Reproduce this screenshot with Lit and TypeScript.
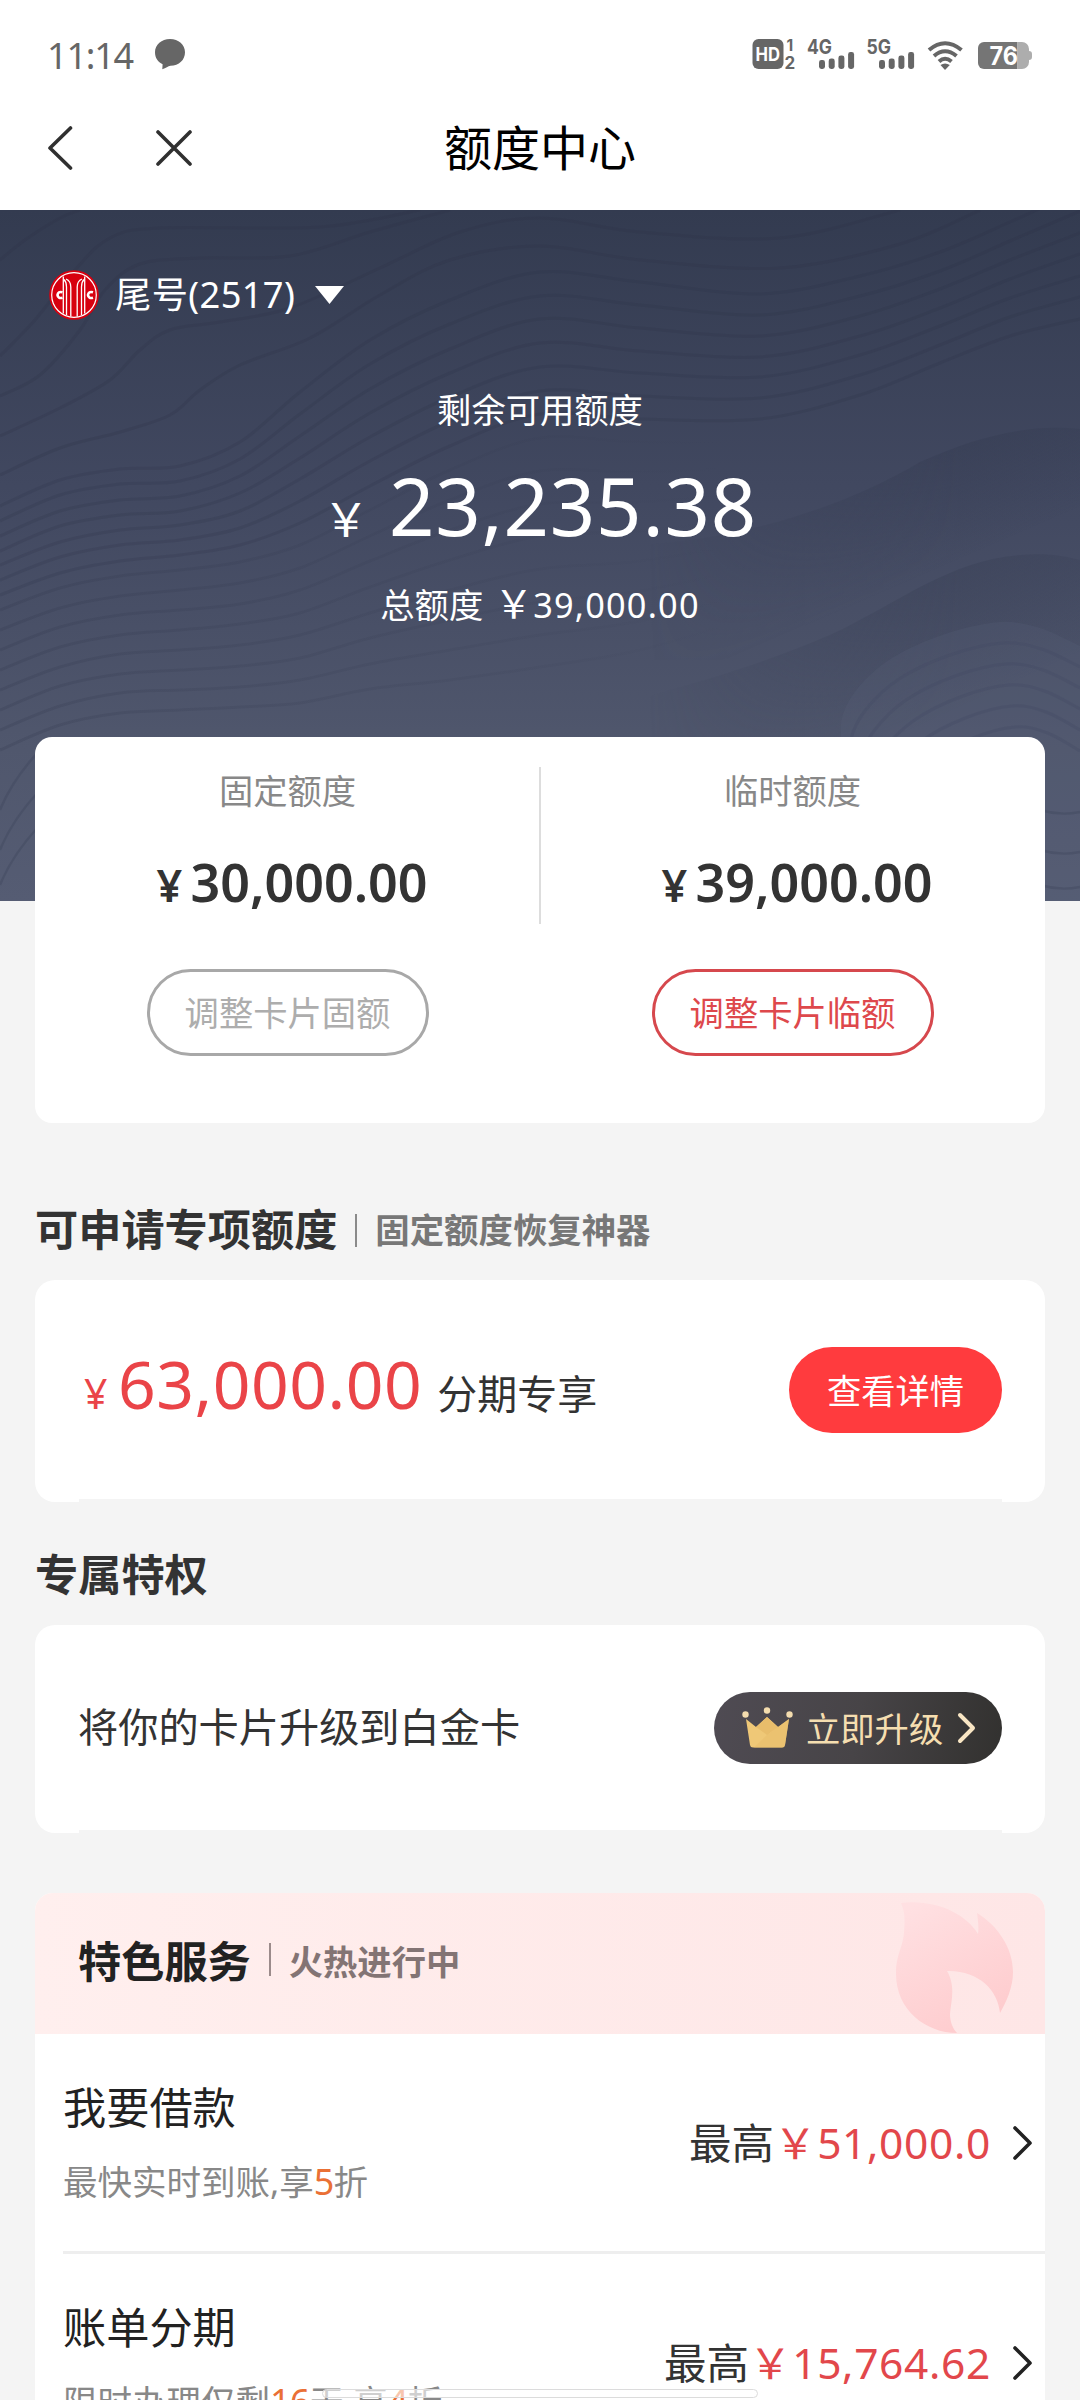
import { LitElement, html, css, svg } from "lit";
import { customElement, property } from "lit/decorators.js";

type Pt = [number, number];

/** Smooth curve through the given points (Catmull-Rom to cubic Bezier). */
function smooth(pts: Pt[]): string {
  let d = `M${pts[0][0]} ${pts[0][1]}`;
  for (let i = 0; i < pts.length - 1; i++) {
    const p0 = pts[Math.max(i - 1, 0)];
    const p1 = pts[i];
    const p2 = pts[i + 1];
    const p3 = pts[Math.min(i + 2, pts.length - 1)];
    const c1 = [p1[0] + (p2[0] - p0[0]) / 6, p1[1] + (p2[1] - p0[1]) / 6];
    const c2 = [p2[0] - (p3[0] - p1[0]) / 6, p2[1] - (p3[1] - p1[1]) / 6];
    d += `C${c1[0].toFixed(1)} ${c1[1].toFixed(1)} ${c2[0].toFixed(1)} ${c2[1].toFixed(1)} ${p2[0]} ${p2[1]}`;
  }
  return d;
}

const XS = [0, 60, 120, 180, 240, 300, 370, 450, 540, 640, 760, 860, 940, 1010, 1080];
const RIDGE_TOP = [296, 270, 259, 256, 232, 182, 130, 90, 62, 72, 84, 66, 42, 12, -20];
const RIDGE_MID = [400, 378, 366, 360, 352, 335, 300, 260, 228, 232, 230, 205, 172, 145, 130];
const RIDGE_LOW = [560, 535, 522, 520, 518, 515, 505, 500, 490, 470, 430, 400, 360, 340, 330];

/** Evenly spaced contour lines between two ridges. */
function between(a: number[], b: number[], n: number): string[] {
  return Array.from({ length: n }, (_, k) => {
    const t = k / n;
    return smooth(XS.map((x, i) => [x, Math.round(a[i] + (b[i] - a[i]) * t)] as Pt));
  });
}

const LEFT_LINES: Pt[][] = [
  [[0, 50], [25, 30], [60, 8], [80, 0]],
  [[0, 146], [35, 110], [75, 60], [110, 28], [160, 18], [320, 17], [420, 0]],
  [[0, 186], [40, 165], [80, 120], [105, 80], [140, 54], [200, 48], [290, 46], [370, 22], [450, 0]],
  [[0, 226], [60, 198], [110, 170], [140, 140], [170, 120], [220, 112], [290, 98], [380, 58], [460, 22], [540, 8], [640, 22], [780, 28], [900, 0]],
  [[0, 265], [60, 238], [120, 222], [170, 205], [200, 180], [240, 155], [310, 128], [380, 85], [450, 50], [540, 36], [640, 50], [780, 58], [900, 34], [980, 0]],
];

const EDGE_A = "M640 335C760 328 860 288 920 252C980 225 1030 214 1080 219";
const EDGE_B = "M560 508C680 480 760 455 830 425C900 392 950 350 1020 345C1045 343 1060 345 1080 350";
const MOUND: Pt[] = [[842, 540], [842, 508], [858, 478], [892, 448], [945, 424], [1000, 412], [1040, 418], [1080, 436]];

@customElement("hero-waves")
class HeroWaves extends LitElement {
  static styles = css`
    :host { display: block; }
    svg { display: block; width: 100%; height: 100%; }
  `;
  render() {
    return html`<svg viewBox="0 0 1080 691" preserveAspectRatio="none" fill="none">
      <defs>
        <linearGradient id="slope-a" x1="850" y1="260" x2="900" y2="375" gradientUnits="userSpaceOnUse">
          <stop offset="0" stop-color="#363d53"></stop><stop offset="1" stop-color="#363d53" stop-opacity="0"></stop>
        </linearGradient>
        <linearGradient id="slope-b" x1="850" y1="390" x2="910" y2="520" gradientUnits="userSpaceOnUse">
          <stop offset="0" stop-color="#3c4359"></stop><stop offset="1" stop-color="#3c4359" stop-opacity="0"></stop>
        </linearGradient>
        <linearGradient id="fade" x1="0" y1="0" x2="1080" y2="0" gradientUnits="userSpaceOnUse">
          <stop offset="0" stop-color="#2f354b" stop-opacity=".22"></stop>
          <stop offset=".45" stop-color="#2f354b" stop-opacity=".1"></stop>
          <stop offset=".68" stop-color="#2f354b" stop-opacity="0"></stop>
        </linearGradient>
        <linearGradient id="reveal" x1="650" y1="0" x2="960" y2="0" gradientUnits="userSpaceOnUse">
          <stop offset="0" stop-color="#000"></stop><stop offset="1" stop-color="#fff"></stop>
        </linearGradient>
        <mask id="right-side" maskUnits="userSpaceOnUse" x="0" y="0" width="1080" height="691">
          <rect width="1080" height="691" fill="url(#reveal)"></rect>
        </mask>
      </defs>
      <g stroke="#2c3246" stroke-opacity=".24" stroke-width="3">
        ${LEFT_LINES.map((l) => svg`<path d=${smooth(l)} />`)}
      </g>
      <g stroke="#2c3246" stroke-opacity=".19" stroke-width="3">
        ${between(RIDGE_TOP, RIDGE_MID, 7).map((d) => svg`<path d=${d} />`)}
      </g>
      <g stroke="url(#fade)" stroke-width="3">
        ${between(RIDGE_MID, RIDGE_LOW, 8).map((d) => svg`<path d=${d} />`)}
      </g>
      <g mask="url(#right-side)">
        <path d="${EDGE_A}V450H640Z" fill="url(#slope-a)" fill-opacity=".55" />
        <path d="${EDGE_B}V691H560Z" fill="url(#slope-b)" fill-opacity=".6" />
      </g>
      <path d="${smooth(MOUND)}V691H842Z" fill="#565e78" fill-opacity=".25" />
      <g stroke="#434a62" stroke-opacity=".3" stroke-width="3">
        ${[1, 2, 3, 4, 5].map((k) => svg`<path d=${smooth(MOUND.map(([x, y]) => [x + k * 9 * (1080 - x) / 240, y + k * 21] as Pt))} />`)}
      </g>
      <g stroke="#3f465c" stroke-opacity=".4" stroke-width="2.4">
        ${[600, 640, 675].map((y) => svg`<path d=${`M1040 ${y}q20 6 40 2M0 ${y}q12 -30 40 -60`} />`)}
      </g>
    </svg>`;
  }
}

@customElement("status-bar")
class StatusBar extends LitElement {
  static styles = css`
    :host { display: flex; justify-content: space-between; height: 105px; padding: 0 48px 0 47px; box-sizing: border-box; }
    .left { display: flex; align-items: flex-start; }
    .time { font-size: 36px; line-height: 40px; margin-top: 36px; color: #666; letter-spacing: -1.2px; width: 108px; white-space: nowrap; }
    .bubble { width: 31px; height: 31px; margin-top: 39px; }
    .right { width: 280px; height: 105px; overflow: visible; }
    text { font-family: Inter, Roboto, sans-serif; font-weight: 700; }
  `;
  private bars(x: number) {
    return [9, 10.5, 13.5, 17].map(
      (h, i) => svg`<rect x=${x + i * 9.7} y=${31.5 - h} width="6" height=${h} rx="2.4" />`
    );
  }
  render() {
    return html`
      <div class="left">
        <span class="time">11:14</span>
        <svg class="bubble" viewBox="0 0 31 31"><path fill="#666" d="M15 0C23.500 0 30 5.600 30 13.300C30 21 24 26.700 15.500 26.700C13 27 11 29 7.300 30.300L7.600 25.300C3 23 0 19 0 13.300C0 5.600 6.600 0 15 0Z"/></svg>
      </div>
      <svg class="right" viewBox="752 0 280 105" fill="#666">
        <rect x="752.500" y="39" width="31" height="30" rx="6"></rect>
        <text x="755.500" y="61" font-size="18.500" fill="#fff" textLength="24.500" lengthAdjust="spacingAndGlyphs">HD</text>
        <text x="786.500" y="50.500" font-size="15.500">1</text>
        <text x="784.500" y="68.500" font-size="17">2</text>
        <text x="807" y="54" font-size="20" textLength="25" lengthAdjust="spacingAndGlyphs">4G</text>
        <g transform="translate(0 37.500)">${this.bars(819)}${this.bars(879)}</g>
        <text x="866.500" y="54" font-size="20" textLength="24.500" lengthAdjust="spacingAndGlyphs">5G</text>
        <g fill="none" stroke="#666" stroke-width="4">
          <path d="M929 50Q945 36.500 961.500 50"></path>
          <path d="M934 56Q945 46.500 956.500 56"></path>
          <path d="M939 61.500Q945 56 951.500 61.500"></path>
        </g>
        <path d="M940.500 65Q945 62 949.800 65L945 70Z"></path>
        <path fill="#757575" d="M984 42H1017.500V69H984A6 6 0 0 1 978 63V48A6 6 0 0 1 984 42Z"></path>
        <path fill="#adadad" d="M1017.500 42H1022A7 7 0 0 1 1029 49V51Q1032 51 1032 54V57Q1032 60 1029 60V62A7 7 0 0 1 1022 69H1017.500Z"></path>
        <text x="989.500" y="65" font-size="25" fill="#fff" textLength="28.500" lengthAdjust="spacingAndGlyphs">76</text>
      </svg>
    `;
  }
}

@customElement("nav-bar")
class NavBar extends LitElement {
  static styles = css`
    :host { display: grid; grid-template-columns: 1fr auto 1fr; align-items: center; height: 105px; padding-bottom: 19px; box-sizing: border-box; }
    .tools { display: flex; align-items: center; gap: 83px; padding-left: 47px; }
    .title { font-size: 48px; line-height: 60px; color: #000; }
    svg { display: block; fill: none; stroke: #303030; stroke-width: 3.6; stroke-linecap: round; stroke-linejoin: round; }
  `;
  render() {
    return html`
      <div class="tools">
        <svg width="26" height="44" viewBox="0 0 26 44"><path d="M23.500 2L3 22L23.500 42"></path></svg>
        <svg width="36" height="36" viewBox="0 0 36 36"><path d="M2 2L34 34M34 2L2 34"></path></svg>
      </div>
      <div class="title">额度中心</div>
      <div></div>
    `;
  }
}

@customElement("limit-column")
class LimitColumn extends LitElement {
  @property() label = "";
  @property() amount = "";
  @property() action = "";
  @property({ type: Boolean, reflect: true }) active = false;
  static styles = css`
    :host { flex: 1; display: flex; flex-direction: column; align-items: center; }
    .label { font-size: 34.300px; line-height: 40px; margin-top: 34px; color: #888; }
    .amount { display: flex; align-items: baseline; margin-top: 37px; margin-left: 9px; font-size: 52px; line-height: 68px; color: #333; font-weight: 600; letter-spacing: 0; }
    .yen { font-size: 45px; width: 34px; }
    .action { box-sizing: border-box; width: 282px; height: 87px; margin-top: 50px; padding-bottom: 3px; border: 3px solid #a8a8a8; border-radius: 44px; display: flex; align-items: center; justify-content: center; font-size: 34.300px; color: #adadad; }
    :host([active]) .action { border-color: #d6484d; color: #de484c; }
  `;
  render() {
    return html`
      <div class="label">${this.label}</div>
      <div class="amount"><span class="yen">¥</span><span>${this.amount}</span></div>
      <div class="action">${this.action}</div>
    `;
  }
}

@customElement("service-row")
class ServiceRow extends LitElement {
  @property() name = "";
  @property() max = "";
  @property({ attribute: false }) note: string[] = [];
  static styles = css`
    :host { display: flex; justify-content: space-between; height: 220px; margin-left: 28px; box-sizing: border-box; border-bottom: 3px solid #eee; padding-right: 13px; }
    .name { font-size: 43.200px; line-height: 50px; color: #222; margin-top: 49px; }
    .note { font-size: 34.500px; line-height: 40px; color: #888; margin-top: 29px; white-space: nowrap; }
    .hot { color: #ea7035; font-size: 36px; letter-spacing: -0.8px; }
    .side { display: flex; height: 60px; margin-top: 79px; align-items: center; }
    .max { font-size: 42.500px; line-height: 60px; color: #333; white-space: nowrap; margin-right: 22px; }
    .num { color: #e2474b; letter-spacing: 0.65px; }
    svg { display: block; fill: none; stroke: #222; stroke-width: 3.6; stroke-linecap: round; stroke-linejoin: round; }
  `;
  render() {
    return html`
      <div>
        <div class="name">${this.name}</div>
        <div class="note">${this.note.map((t, i) => (i % 2 ? html`<span class="hot">${t}</span>` : t))}</div>
      </div>
      <div class="side">
        <div class="max">最高<span class="num">￥${this.max}</span></div>
        <svg width="19" height="34" viewBox="0 0 19 34"><path d="M2 2L17 17L2 32"></path></svg>
      </div>
    `;
  }
}

@customElement("app-root")
class AppRoot extends LitElement {
  static styles = css`
    :host { display: block; width: 1080px; height: 2400px; overflow: hidden; position: relative; background: #f4f4f4; font-family: "Noto Sans", "Noto Sans CJK SC", sans-serif; color: #333; }
    .top { background: #fff; }
    .hero { position: relative; height: 691px; background: linear-gradient(#333b50, #414860 40%, #50576d 78%, #555c73); color: #fff; display: flex; flex-direction: column; align-items: center; overflow: hidden; }
    .waves { position: absolute; inset: 0; }
    .account { position: relative; align-self: stretch; display: flex; align-items: center; height: 50px; margin: 60px 0 0 49px; }
    .account-name { font-size: 36.300px; line-height: 48px; padding-bottom: 2px; margin-left: 16px; letter-spacing: 0.35px; }
    .caret { margin-left: 20px; }
    .hero-label { position: relative; font-size: 34.300px; line-height: 40px; margin-top: 70px; }
    .hero-amount { position: relative; display: flex; align-items: baseline; font-size: 79.500px; line-height: 100px; margin: 25px 0 0 0; letter-spacing: 0.8px; }
    .hero-yen { font-size: 46px; width: 66px; letter-spacing: 0; }
    .hero-total { position: relative; display: flex; align-items: baseline; font-size: 34.300px; line-height: 44px; margin-top: 13px; }
    .total-yen { font-size: 39px; width: 50px; text-align: right; }
    .total-num { letter-spacing: 1.2px; }
    .limits { position: relative; display: flex; height: 386px; margin: -164px 35px 0; background: #fff; border-radius: 17px; }
    .split { width: 2px; height: 157px; margin: 30px -1px 0; background: #ddd; }
    .heading { display: flex; align-items: center; height: 50px; padding-left: 35px; font-size: 43.200px; font-weight: 700; line-height: 50px; }
    .bar { width: 2px; height: 33px; margin: 0 18px 0 18px; background: #8a8a8a; }
    .sub { font-size: 34.400px; color: #777; }
    .card { box-sizing: border-box; position: relative; margin: 0 35px; padding: 0 43px; background: #fff; border-radius: 20px; display: flex; justify-content: space-between; }
    .card::after { content: ""; position: absolute; left: 44px; right: 43px; bottom: 0; height: 3px; background: #f4f4f4; }
    .special-title { margin-top: 82px; }
    .special { height: 222px; margin-top: 25px; }
    .offer { display: flex; align-items: baseline; margin-top: 58px; height: 90px; line-height: 90px; font-size: 66px; color: #ea4448; letter-spacing: 0.5px; }
    .offer-yen { font-size: 41px; width: 34px; margin-left: 6px; }
    .offer-text { font-size: 40px; color: #333; margin-left: 15px; letter-spacing: 0; }
    .details { box-sizing: border-box; padding-bottom: 3px; width: 213px; height: 86px; margin-top: 67px; border-radius: 43px; background: #ff3b3e; color: #fff; font-size: 34.300px; display: flex; align-items: center; justify-content: center; }
    .perk-title { margin-top: 48px; }
    .perk { height: 208px; margin-top: 25px; }
    .perk-text { font-size: 40.200px; line-height: 50px; margin-top: 77px; }
    .upgrade { box-sizing: border-box; width: 288px; height: 72px; margin-top: 67px; padding-left: 28px; border-radius: 36px; background: linear-gradient(100deg, #4f4b53, #474447 50%, #32312f); color: #f5deb0; font-size: 34.300px; display: flex; align-items: center; }
    .upgrade-text { margin: 0 14px 0 13px; padding-bottom: 2px; white-space: nowrap; }
    .services { margin: 60px 35px 0; background: #fff; border-radius: 18px 18px 0 0; overflow: hidden; }
    .services-head { position: relative; height: 141px; background: linear-gradient(90deg, #ffefee, #fee6e6); display: flex; align-items: center; padding: 0 0 8px 43px; box-sizing: border-box; font-weight: 700; font-size: 43.200px; color: #222; }
    .services-head .sub { color: #837474; font-size: 34.300px; }
    .services-head .bar { background: #9b8b8b; }
    .flame { position: absolute; right: 31px; top: 9px; }
    .gesture { position: absolute; left: 322px; bottom: 2px; width: 436px; height: 9px; box-sizing: border-box; border: 1.5px solid #dcdcdc; border-radius: 5px; background: rgba(255, 255, 255, 0.6); }
  `;
  render() {
    return html`
      <div class="top">
        <status-bar></status-bar>
        <nav-bar></nav-bar>
      </div>
      <div class="hero">
        <hero-waves class="waves"></hero-waves>
        <div class="account">
          <svg width="50" height="50" viewBox="0 0 50 50">
            <circle cx="25" cy="25" r="24.800" fill="#d7000f"></circle>
            <circle cx="25" cy="25" r="22.300" fill="none" stroke="#fff" stroke-width="1.200"></circle>
            <g fill="none" stroke="#fff" stroke-width="1.300">
              <path d="M14.300 6.500V43.500M35.700 6.500V43.500"></path>
              <path d="M15 9.500Q17.500 12 17.500 17V45M35 9.500Q32.500 12 32.500 17V45"></path>
              <path d="M17 9Q21.800 11 21.800 17V46.500M33 9Q28.200 11 28.200 17V46.500"></path>
            </g>
            <g fill="none" stroke="#fff" stroke-width="2.600">
              <path d="M13.500 22.300Q9 21 8.500 25Q9 29 13.500 27.700"></path>
              <path d="M44 22.300Q39.500 21 39 25Q39.500 29 44 27.700"></path>
            </g>
          </svg>
          <span class="account-name">尾号(2517)</span>
          <svg class="caret" width="29" height="18" viewBox="0 0 29 18"><path d="M0 0H29L14.500 18Z" fill="#fff"></path></svg>
        </div>
        <div class="hero-label">剩余可用额度</div>
        <div class="hero-amount"><span class="hero-yen">￥</span><span>23,235.38</span></div>
        <div class="hero-total">
          <span>总额度</span><span class="total-yen">￥</span><span class="total-num">39,000.00</span>
        </div>
      </div>
      <div class="limits">
        <limit-column label="固定额度" amount="30,000.00" action="调整卡片固额"></limit-column>
        <div class="split"></div>
        <limit-column label="临时额度" amount="39,000.00" action="调整卡片临额" active></limit-column>
      </div>
      <div class="heading special-title">可申请专项额度<span class="bar"></span><span class="sub">固定额度恢复神器</span></div>
      <div class="card special">
        <div class="offer"><span class="offer-yen">¥</span><span>63,000.00</span><span class="offer-text">分期专享</span></div>
        <div class="details">查看详情</div>
      </div>
      <div class="heading perk-title">专属特权</div>
      <div class="card perk">
        <div class="perk-text">将你的卡片升级到白金卡</div>
        <div class="upgrade">
          <svg width="51" height="42" viewBox="0 0 51 42">
            <path d="M4 12L14 20L25 10L36 20L47 12L43 38Q42.600 40.500 40 40.500H11Q8.400 40.500 8 38Z" fill="#efc877"></path>
            <path d="M25 10L36 20L25 28L14 20Z" fill="#e8bd6b"></path>
            <path d="M47 12L43 38Q42.600 40.500 40 40.500H12L25 28Z" fill="#e9bf6e" fill-opacity=".7"></path>
            <g fill="#f3dcae"><circle cx="3.500" cy="7.500" r="3.200"></circle><circle cx="25" cy="3.500" r="3.200"></circle><circle cx="47.500" cy="7.500" r="3.200"></circle></g>
          </svg>
          <span class="upgrade-text">立即升级</span>
          <svg width="20" height="32" viewBox="0 0 20 32"><path d="M3 3L16 16L3 29" fill="none" stroke="#f9e6c4" stroke-width="4" stroke-linecap="round" stroke-linejoin="round"></path></svg>
        </div>
      </div>
      <div class="services">
        <div class="services-head">
          特色服务<span class="bar"></span><span class="sub">火热进行中</span>
          <svg class="flame" width="118" height="132" viewBox="0 0 118 132">
            <defs><linearGradient id="glow" x1="0.200" y1="0" x2="0.700" y2="1"><stop offset="0" stop-color="#ffe0e2"></stop><stop offset="1" stop-color="#fecbcd"></stop></linearGradient></defs>
            <path fill="url(#glow)" d="M5 1C40 -3 70 12 82 32C83 26 82 18 81 11C102 24 117 46 117 70C117 86 110 100 104 111C102 88 82 68 51 69C60 84 55 100 54 112C54 120 57 127 61 131C30 131 0 108 0 72C0 52 7 46 8 30C9 18 9 10 5 1Z"></path>
          </svg>
        </div>
        <service-row name="我要借款" max="51,000.0" .note=${["最快实时到账,享", "5", "折"]}></service-row>
        <service-row name="账单分期" max="15,764.62" .note=${["限时办理仅剩", "16", "天,享", "4", "折"]}></service-row>
      </div>
      <div class="gesture"></div>
    `;
  }
}
